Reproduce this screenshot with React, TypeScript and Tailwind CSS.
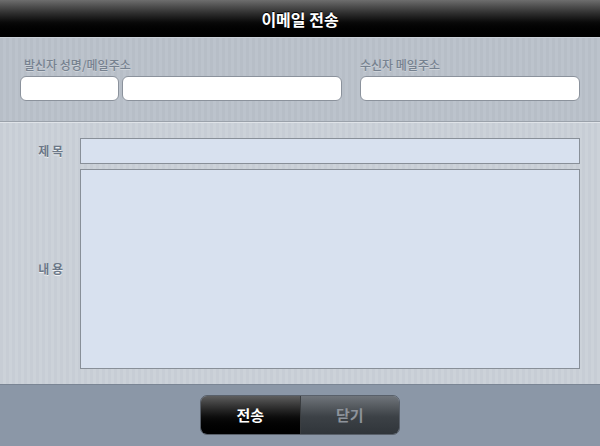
export default function App() {
  const font = { fontFamily: '"Noto Sans CJK KR", "Noto Sans", sans-serif' };

  return (
    <div className="flex h-[446px] w-[600px] flex-col overflow-hidden" style={font}>
      {/* Title bar */}
      <div className="flex h-[37px] items-center justify-center bg-gradient-to-b from-[#6e6e6e] via-[#0a0a0a] via-60% to-black">
        <h1 className="text-[16px] font-bold text-white [text-shadow:0_-1px_0_#000]">이메일 전송</h1>
      </div>

      {/* Sender / recipient */}
      <div className="flex h-[85px] gap-[18px] border-b border-[#9ba2ab] bg-[repeating-linear-gradient(90deg,#b7bec7_0px,#b7bec7_3px,#bcc3cc_3px,#bcc3cc_6px)] px-5 pt-[17px] shadow-[inset_0_1px_0_#c9cfd6]">
        <div className="flex w-[322px] flex-col">
          <label className="h-[22px] pl-1 text-[12px] font-medium leading-[22px] text-[#76818f] [text-shadow:0_1px_0_#cdd2d8]">발신자 성명/메일주소</label>
          <div className="flex gap-[3px]">
            <input className="h-[25px] w-[99px] rounded-[6px] border border-[#8b929c] bg-white outline-none" />
            <input className="h-[25px] w-[220px] rounded-[6px] border border-[#8b929c] bg-white outline-none" />
          </div>
        </div>
        <div className="flex w-[220px] flex-col">
          <label className="h-[22px] text-[12px] font-medium leading-[22px] text-[#76818f] [text-shadow:0_1px_0_#cdd2d8]">수신자 메일주소</label>
          <input className="h-[25px] w-[220px] rounded-[6px] border border-[#8b929c] bg-white outline-none" />
        </div>
      </div>

      {/* Subject / body */}
      <div className="flex flex-1 flex-col gap-[5px] border-t border-[#e0e4e9] bg-[repeating-linear-gradient(90deg,#c7cdd5_0px,#c7cdd5_3px,#ccd2d9_3px,#ccd2d9_6px)] pb-[15px] pr-5 pt-[15px]">
        <div className="flex items-center">
          <span className="w-20 pr-[17px] text-right text-[12px] font-bold text-[#6c7888] [text-shadow:0_1px_0_#eef1f4]">제 목</span>
          <input className="h-[26px] flex-1 border border-[#888f98] bg-[#d8e1ef] outline-none" />
        </div>
        <div className="flex flex-1 items-center">
          <span className="w-20 pr-[17px] text-right text-[12px] font-bold text-[#6c7888] [text-shadow:0_1px_0_#eef1f4]">내 용</span>
          <textarea className="h-full flex-1 resize-none border border-[#888f98] bg-[#d8e1ef] outline-none" />
        </div>
      </div>

      {/* Footer buttons */}
      <div className="flex h-[62px] justify-center border-t border-[#7a8594] bg-[#8b97a7] pt-[10px]">
        <div className="flex h-10 w-[200px] overflow-hidden rounded-[7px] border border-[#59606a]">
          <button className="flex-1 border-r border-[#3a3d40] bg-gradient-to-b from-[#5e5e5e] via-[#0d0d0d] via-55% to-black text-[15px] font-bold text-white">전송</button>
          <button className="flex-1 bg-gradient-to-b from-[#70757b] via-[#3c4146] via-55% to-[#30353a] text-[15px] font-bold text-[#8d939b]">닫기</button>
        </div>
      </div>
    </div>
  );
}
